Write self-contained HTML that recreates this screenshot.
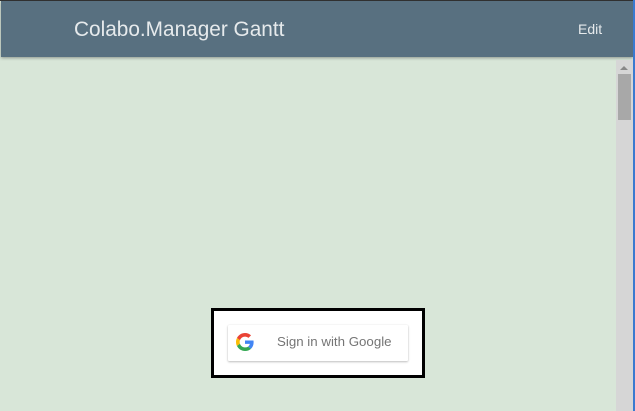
<!DOCTYPE html>
<html><head><meta charset="utf-8"><style>
*{margin:0;padding:0;box-sizing:border-box}
html,body{width:635px;height:411px;overflow:hidden;background:#d8e6d8;font-family:"Liberation Sans",Arial,sans-serif}
.top{position:absolute;left:0;top:0;width:635px;height:1px;background:#333}
.hdr{position:absolute;left:1px;top:1px;width:632px;height:56px;background:#587080;box-shadow:0 1px 3px rgba(0,0,0,.35)}
.title{position:absolute;left:73px;top:17px;font-size:20.8px;color:#e6eaec}
.edit{position:absolute;left:577px;top:20px;font-size:14px;color:#e6eaec}
.sb{position:absolute;left:616px;top:60px;width:17px;height:351px;background:#d6d6d6}
.arr{position:absolute;left:620px;top:66px;width:0;height:0;border-left:4px solid transparent;border-right:4px solid transparent;border-bottom:4px solid #888}
.thumb{position:absolute;left:618px;top:74px;width:13px;height:46px;background:#a8a8a8}
.edge{position:absolute;left:633px;top:0;width:2px;height:411px;background:#3a7ad0}
.box{position:absolute;left:211px;top:308px;width:214px;height:70px;background:#fff;border:3px solid #000}
.btn{position:absolute;left:228px;top:325px;width:180px;height:36px;background:#fff;box-shadow:0 1px 2px rgba(0,0,0,.25),0 0 1px rgba(0,0,0,.1);border-radius:1px}
.btn svg{position:absolute;left:8px;top:8px}
.btn span{position:absolute;left:49px;top:9px;font-size:13.3px;color:#757575}
</style></head><body>
<div class="top"></div>
<div class="hdr"><div class="title">Colabo.Manager Gantt</div><div class="edit">Edit</div></div>
<div class="sb"></div><div class="arr"></div><div class="thumb"></div>
<div class="edge"></div>
<div class="box"></div>
<div class="btn"><svg width="18" height="18" viewBox="0 0 48 48"><path fill="#EA4335" d="M24 9.5c3.54 0 6.71 1.22 9.21 3.6l6.85-6.85C35.9 2.38 30.47 0 24 0 14.62 0 6.51 5.38 2.56 13.22l7.98 6.19C12.43 13.72 17.74 9.5 24 9.5z"/><path fill="#4285F4" d="M46.98 24.55c0-1.57-.15-3.09-.38-4.55H24v9.02h12.94c-.58 2.96-2.26 5.48-4.78 7.18l7.73 6c4.510-4.18 7.090-10.36 7.090-17.650z"/><path fill="#FBBC05" d="M10.53 28.59c-.48-1.45-.76-2.99-.76-4.590s.27-3.14.76-4.59l-7.98-6.19C.92 16.46 0 20.12 0 24c0 3.88.92 7.54 2.56 10.78l7.970-6.19z"/><path fill="#34A853" d="M24 48c6.48 0 11.93-2.130 15.89-5.81l-7.73-6c-2.15 1.45-4.92 2.3-8.16 2.3-6.26 0-11.570-4.22-13.470-9.910l-7.980 6.190C6.510 42.620 14.620 48 24 48z"/></svg><span>Sign in with Google</span></div>
</body></html>
